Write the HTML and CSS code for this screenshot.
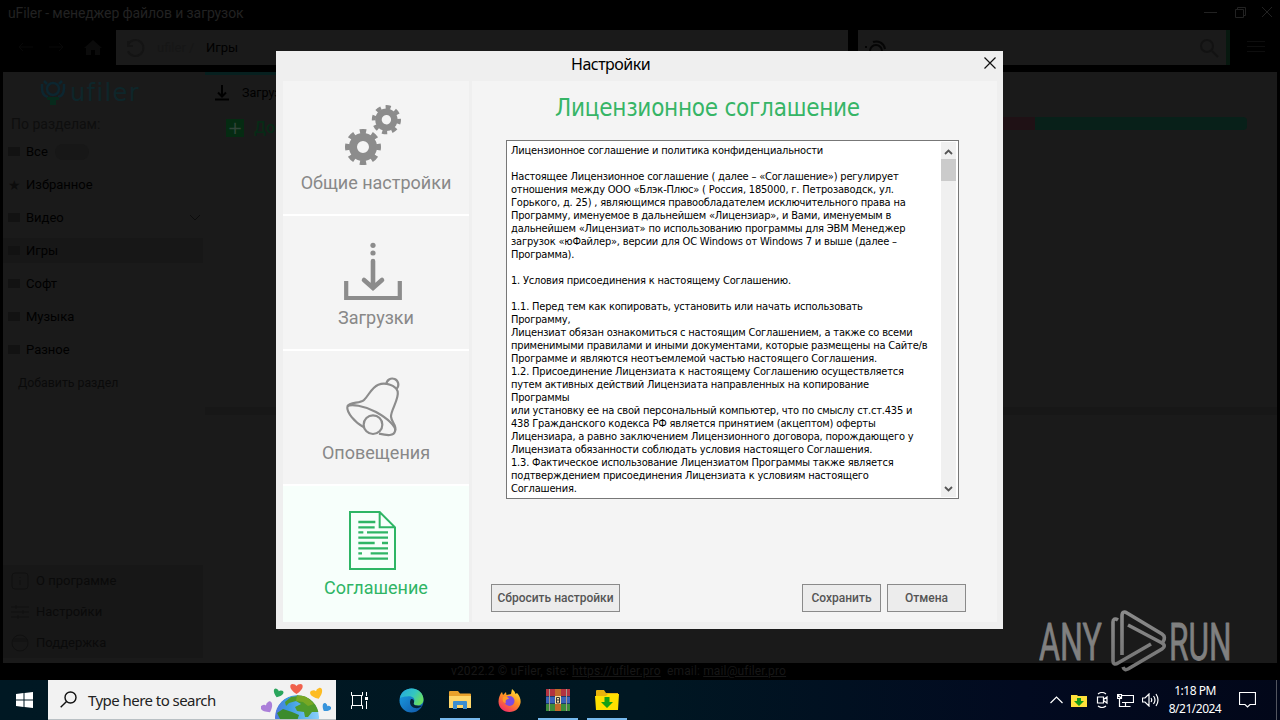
FILE: index.html
```html
<!DOCTYPE html>
<html lang="ru">
<head>
<meta charset="UTF-8">
<meta name="viewport" content="width=device-width, initial-scale=1.0">
<title>uFiler - менеджер файлов и загрузок</title>
<link rel="stylesheet" href="styles.css">
</head>
<body>
    <section class="app">
        <header class="titlebar">
            <span class="app-title">uFiler - менеджер файлов и загрузок</span>
            <svg class="win-buttons" width="72" height="14" viewBox="0 0 72 14">
                <path d="M0 7.500h13M31.500 4.500h8v8h-8zM33.500 4.500v-2h8v8h-2M58 2l10 10M68 2l-10 10"/>
            </svg>
        </header>

        <div class="toolbar">
            <div class="nav">
                <svg width="86" height="20" viewBox="0 0 86 20">
                    <path class="arrow" d="M1 10h14M1 10l4-4M1 10l4 4M31 10h14M45 10l-4-4M45 10l-4 4"/>
                    <path class="home" d="M66 11l9-8 9 8h-2v7h-5v-5h-4v5h-5v-7z"/>
                </svg>
            </div>
            <div class="address">
                <svg width="20" height="20" viewBox="0 0 20 20"><path d="M3 7a8 8 0 1 1 0 6M3 3v5h5"/></svg>
                <span class="crumb">ufiler /</span>
                <span>Игры</span>
            </div>
            <div class="search">
                <svg width="24" height="22" viewBox="0 0 24 22"><path class="dark" d="M6 18v-4a6 6 0 0 1 12 0v4M9 5a9 9 0 0 1 12 7M2 9v2M2 14v2"/></svg>
                <svg width="20" height="20" viewBox="0 0 20 20"><path d="M13 13l6 6"/><circle cx="8" cy="8" r="6"/></svg>
            </div>
            <div class="burger"><i></i><i></i><i></i></div>
        </div>

        <div class="content">
            <aside class="side">
                <div class="logo">
                    <svg width="26" height="27" viewBox="0 0 26 27">
                        <path class="blue" d="M2 4v4q0 8 6 9M24 4v4q0 8-6 9M4 1l3 3M22 1l-3 3"/>
                        <circle class="blue" cx="13" cy="9" r="6"/>
                        <path class="green" d="M7 17h12v3h-3v5h-6v-5H7z"/>
                    </svg>
                    <span>ufiler</span>
                </div>
                <div class="side-title">По разделам:</div>
                <ul class="sections">
                    <li><i class="folder"></i>Все<b class="toggle"></b></li>
                    <li><i class="star">★</i>Избранное</li>
                    <li><i class="folder"></i>Видео
                        <svg class="chevron" width="12" height="8" viewBox="0 0 12 8"><path d="M1 1l5 5 5-5"/></svg>
                    </li>
                    <li class="current"><i class="folder"></i>Игры</li>
                    <li><i class="folder"></i>Софт</li>
                    <li><i class="folder"></i>Музыка</li>
                    <li><i class="folder"></i>Разное</li>
                    <li class="add">Добавить раздел</li>
                </ul>
                <ul class="links">
                    <li><svg width="20" height="20" viewBox="0 0 20 20"><rect x="2" y="2" width="16" height="16" rx="3"/><path d="M10 9v5M10 6v1"/></svg>О программе</li>
                    <li><svg width="20" height="20" viewBox="0 0 20 20"><path d="M1 5h18M1 10h18M1 15h18M6 3v4M13 8v4M8 13v4"/></svg>Настройки</li>
                    <li><svg width="20" height="20" viewBox="0 0 20 20"><circle cx="10" cy="10" r="8"/><path d="M3 8h14M3 6h14"/></svg>Поддержка</li>
                </ul>
            </aside>
            <div class="files">
                <div class="tab">
                    <svg width="16" height="16" viewBox="0 0 16 16"><path d="M8 0v11M4 7.500l4 4 4-4M1 14.500h14"/></svg>
                    <span>Загрузки</span>
                </div>
                <div class="files-head">
                    <span class="plus">+</span>
                    <span class="add-file">Добавить</span>
                    <div class="disk"><i></i></div>
                </div>
                <div class="files-list"></div>
                <div class="files-info"></div>
            </div>
        </div>

        <footer class="status">v2022.2 © uFiler, site: <u>https://ufiler.pro</u> &nbsp;email: <u>mail@ufiler.pro</u></footer>
    </section>

    <section class="dialog">
        <header class="dialog-head">
            <span>Настройки</span>
            <svg class="close" width="12" height="12" viewBox="0 0 12 12"><path d="M.5.500l11 11M11.500.500l-11 11"/></svg>
        </header>
        <div class="dialog-body">
            <nav class="tabs">
                <a>
                    <svg width="60" height="60" viewBox="0 0 60 60">
                        <g class="gear" transform="translate(20 42)">
                            <circle r="10" stroke-width="8"/>
                            <circle class="teeth" r="15.600" stroke-width="4.800" pathLength="16"/>
                        </g>
                        <g class="gear" transform="translate(43.400 14.700) rotate(8) scale(.81)">
                            <circle r="9.800" stroke-width="8"/>
                            <circle class="teeth" r="15.600" stroke-width="4.800" pathLength="16"/>
                        </g>
                    </svg>
                    <span>Общие настройки</span>
                </a>
                <a>
                    <svg width="60" height="60" viewBox="0 0 60 60">
                        <g fill="#8c8c8c"><circle cx="30" cy="5.300" r="2.600"/><circle cx="30" cy="13" r="2.600"/></g>
                        <path class="line" stroke-width="4.600" stroke-linecap="round" d="M30 21v27M21 40l9 8 9-8"/>
                        <path class="line" stroke-width="4.200" d="M3.200 41v17h53.600V41"/>
                    </svg>
                    <span>Загрузки</span>
                </a>
                <a>
                    <svg class="bell" width="60" height="62" viewBox="201 105 180 186">
                        <g class="line" stroke-width="6.500">
                            <path d="M331 133a18 18 0 1 1 31 13"/>
                            <path d="M214 200C220 184 252 192 264 180C280 164 286 143 307 134C329 126 359 136 365 154C370 178 344 210 345 230C346 246 361 254 358 270"/>
                            <path d="M214 200C222 190 266 197 300 216C334 235 362 259 357 274C354 288 335 287 309 281M214 200C212 217 234 246 265 263"/>
                            <circle cx="291" cy="254" r="28"/>
                        </g>
                    </svg>
                    <span>Оповещения</span>
                </a>
                <a class="active">
                    <svg width="60" height="60" viewBox="201 510 180 180">
                        <path class="line" stroke-width="6" d="M222 516h89l46 46v125H222zM311 516v46h46"/>
                        <path class="line" stroke-width="7" d="M247 546h51M247 562h49M247 577h15M273 577h63M247 593h89M247 609h49M318 609h18M247 625h89M247 640h11M284 640h52M247 656h89"/>
                    </svg>
                    <span>Соглашение</span>
                </a>
            </nav>
            <div class="panel">
                <h1>Лицензионное соглашение</h1>
                <div class="license">
<pre>Лицензионное соглашение и политика конфиденциальности

Настоящее Лицензионное соглашение ( далее – «Соглашение») регулирует
отношения между ООО «Блэк-Плюс» ( Россия, 185000, г. Петрозаводск, ул.
Горького, д. 25) , являющимся правообладателем исключительного права на
Программу, именуемое в дальнейшем «Лицензиар», и Вами, именуемым в
дальнейшем «Лицензиат» по использованию программы для ЭВМ Менеджер
загрузок «юФайлер», версии для ОС Windows от Windows 7 и выше (далее –
Программа).

1. Условия присоединения к настоящему Соглашению.

1.1. Перед тем как копировать, установить или начать использовать
Программу,
Лицензиат обязан ознакомиться с настоящим Соглашением, а также со всеми
применимыми правилами и иными документами, которые размещены на Сайте/в
Программе и являются неотъемлемой частью настоящего Соглашения.
1.2. Присоединение Лицензиата к настоящему Соглашению осуществляется
путем активных действий Лицензиата направленных на копирование
Программы
или установку ее на свой персональный компьютер, что по смыслу ст.ст.435 и
438 Гражданского кодекса РФ является принятием (акцептом) оферты
Лицензиара, а равно заключением Лицензионного договора, порождающего у
Лицензиата обязанности соблюдать условия настоящего Соглашения.
1.3. Фактическое использование Лицензиатом Программы также является
подтверждением присоединения Лицензиата к условиям настоящего
Соглашения.</pre>
                    <div class="scrollbar">
                        <svg width="9" height="6" viewBox="0 0 9 6"><path d="M1 5l3.500-3.500L8 5"/></svg>
                        <i class="thumb"></i>
                        <svg width="9" height="6" viewBox="0 0 9 6"><path d="M1 1l3.500 3.500L8 1"/></svg>
                    </div>
                </div>
                <div class="buttons">
                    <button class="reset">Сбросить настройки</button>
                    <button>Сохранить</button>
                    <button>Отмена</button>
                </div>
            </div>
        </div>
    </section>

    <svg class="watermark" width="200" height="64" viewBox="0 0 200 64">
        <defs>
            <linearGradient id="metal" x1="0" y1="0" x2="0" y2="1">
                <stop offset="0" stop-color="#8a8a8a"/>
                <stop offset="1" stop-color="#747474"/>
            </linearGradient>
        </defs>
        <text transform="translate(0 50.500) scale(.63 1)">ANY</text>
        <text transform="translate(130 50.500) scale(.62 1)">RUN</text>
        <path d="M79 11c-3-2-5-1-5 2v39c0 3 2 4 5 2l33-19M83 46V7c0-4 2-5 5-3l35 21c3 2 3 5 1 8M89 16l34 18c3 2 3 4 0 6L89 60c-2 1-4 1-5-2"/>
    </svg>

    <footer class="taskbar">
        <div class="start">
            <svg width="17" height="16" viewBox="0 0 17 16"><path fill="#fff" d="M0 2l7.500-1v6.500H0zM8.500.900L17 0v7.500H8.500zM0 8.500h7.500V15L0 14zM8.500 8.500H17V16l-8.500-1z"/></svg>
        </div>
        <div class="task-search">
            <svg class="lens" width="17" height="17" viewBox="0 0 17 17"><circle cx="10.500" cy="6.500" r="5.500"/><path d="M6.500 10.500L.700 16.300"/></svg>
            <span>Type here to search</span>
            <svg class="earth" width="70" height="38" viewBox="0 0 70 38">
                <defs>
                    <path id="heart" d="M0 5C-8 0-7-5-4-5Q-1-5 0-3Q1-5 4-5C7-5 8 0 0 5z"/>
                    <clipPath id="globe"><circle cx="36" cy="36" r="22"/></clipPath>
                    <linearGradient id="sea"><stop offset="0" stop-color="#5478e0"/><stop offset=".3" stop-color="#3b9be0"/><stop offset="1" stop-color="#8bd0fa"/></linearGradient>
                </defs>
                <g clip-path="url(#globe)">
                    <circle cx="36" cy="36" r="22" fill="url(#sea)"/>
                    <path fill="#4f9a2b" d="M24 21l6-5 14-2 10 7 4 10-7 0-4 5h-3l-1-5-7-1-2-4 6-3-5-3-7 2-3 3z"/>
                    <path fill="#3c8b2d" d="M16 32l6-4 9 3 7 3-2 6H20z"/>
                    <path fill="#78a824" d="M36 14l9 1 8 8-6 2-5-4-7-1z"/>
                </g>
                <use href="#heart" fill="#f0614c" transform="translate(35.500 8)"/>
                <use href="#heart" fill="#2aa55c" transform="translate(17 12.500) rotate(20) scale(.8)"/>
                <use href="#heart" fill="#fdbc22" transform="translate(56 13) rotate(-20)"/>
                <use href="#heart" fill="#ab7fd9" transform="translate(6.500 27) rotate(-30)"/>
                <use href="#heart" fill="#3794dc" transform="translate(65 27) rotate(35) scale(.75)"/>
            </svg>
        </div>
        <div class="task-icons">
            <span class="view"><svg width="17" height="17" viewBox="0 0 17 17"><path fill="none" stroke="#fff" d="M.500 0v3.500h11V0M.500 17v-3.500h11V17M1.500 3.500v10M10.500 3.500v10M15.500 0v4M15.500 9v8"/><path fill="#fff" d="M14 5h3v3h-3z"/></svg></span>
            <span>
                <svg width="25" height="25" viewBox="0 0 25 25">
                    <defs>
                        <linearGradient id="edge-top" x1="0" y1="0" x2="1" y2=".5"><stop offset="0" stop-color="#25a6e0"/><stop offset=".6" stop-color="#34c6c0"/><stop offset="1" stop-color="#67dd64"/></linearGradient>
                        <linearGradient id="edge-low" x1="0" y1="0" x2="1" y2="1"><stop offset="0" stop-color="#1aa2e6"/><stop offset="1" stop-color="#1053a5"/></linearGradient>
                    </defs>
                    <circle cx="12.500" cy="12.500" r="12" fill="url(#edge-low)"/>
                    <path fill="url(#edge-top)" d="M1 10C2 4 7 .500 12.500.500 20 .500 24.500 6 24.500 11.500c0 4-3 6-6.500 6-3 0-4-1.500-3-3 2-5-3-7-7-6-3 0-5 .500-7 1.500z"/>
                    <path fill="#05243a" d="M12 11c-2 3-1 8 4 9 3 .500 5-.500 7-2-1-.500-3 0-5-.500-3 0-4-1.500-3-3 .600-2-1-4-3-3.500z"/>
                </svg>
            </span>
            <span class="open">
                <svg width="22" height="18" viewBox="0 0 22 18"><path fill="#e9a22c" d="M0 1q0-1 1-1h8l2 2.500h10q1 0 1 1V8H0z"/><path fill="#ffd76a" d="M0 5h22v12H0z"/><path fill="#3c8fd0" d="M4 18v-7q0-1 1-1h12q1 0 1 1v7h-4v-4H8v4z"/></svg>
            </span>
            <span>
                <svg width="23" height="23" viewBox="0 0 23 23">
                    <defs><linearGradient id="fox" x1=".8" y1="0" x2=".2" y2="1"><stop offset="0" stop-color="#ffe83b"/><stop offset=".45" stop-color="#ff8f22"/><stop offset="1" stop-color="#f2266b"/></linearGradient></defs>
                    <path fill="url(#fox)" d="M14 0c2 1.500 3 3 3.500 5L19 4c3 3 4 7 3.500 10-1 5-5 9-11 9C5 23 .500 18.500.500 12.500.500 9 2 5 4 3l1 3 3-3 .500 3L13 5z"/>
                    <circle cx="11.500" cy="12" r="5" fill="#7b4be0"/><path fill="#ff9a2a" d="M5 8c3-1 5 0 6 2-3 0-4 2-3 4-3 0-4-3-3-6z"/>
                </svg>
            </span>
            <span class="open">
                <svg width="24" height="22" viewBox="0 0 24 22"><path fill="#b3323f" d="M0 0h24v7H0z"/><path fill="#3a62b8" d="M0 7.500h24v7H0z"/><path fill="#3c8c3c" d="M0 15h24v7H0z"/><path fill="#a89a90" d="M3 0h1v22H3zM20 0h1v22h-1z"/><path fill="#c26a2a" d="M9 0h6v22H9z"/><path fill="#f3d9a0" d="M9 7h6v8H9z"/><path fill="none" stroke="#333" d="M10.500 11V8.500h3V11M10.500 11h3v3h-3z"/></svg>
            </span>
            <span class="open">
                <svg width="24" height="20" viewBox="0 0 24 20"><path fill="#e8b20c" d="M1 1q0-1 1-1h7l2 3h12v6H1z"/><path fill="#ffe000" d="M0 6h11l2-2h11l-1 16H1z"/><path fill="#14a014" d="M9.500 7h5v5H18l-6 6-6-6h3.500z"/></svg>
            </span>
        </div>
        <div class="tray">
            <svg width="13" height="8" viewBox="0 0 13 8"><path d="M.500 7L6.500 1l6 6"/></svg>
            <svg width="16" height="13" viewBox="0 0 16 13"><path fill="#ffe13a" stroke="none" d="M0 1h6l1 1h9v11H0z"/><path fill="#189a18" stroke="none" d="M6 4h4v3h3l-5 5-5-5h3z"/></svg>
            <svg width="14" height="16" viewBox="0 0 14 16"><path d="M3 2q4-3 8 0M3 14q4 3 8 0M2.500 5h6v6h-6zM8.500 7.500L12 5v6L8.500 8.500"/></svg>
            <svg width="17" height="14" viewBox="0 0 17 14"><path d="M5 2.500h11.500v7H5M2.500 6v7.500h11M8.500 9.500v4M.500 1.500h4v4h-4zM1 2l3 3"/></svg>
            <svg width="17" height="14" viewBox="0 0 17 14"><path d="M.500 5h2.500l4-4v12l-4-4H.500zM9 5q1.500 2 0 4M11.500 3q3 4 0 8M14 1q4 6 0 12"/></svg>
            <div class="clock"><span>1:18 PM</span><span>8/21/2024</span></div>
            <svg width="17" height="16" viewBox="0 0 17 16"><path d="M.500.500h16v12H11l-2.500 2.500L6 12.500H.500z"/></svg>
        </div>
    </footer>
</body>
</html>
```

FILE: styles.css
```css
* {
    box-sizing: border-box;
}
body {
    margin: 0;
    width: 1280px;
    height: 720px;
    overflow: hidden;
    position: relative;
    display: flex;
    flex-direction: column;
    background: #000;
    font-family: Roboto, "Liberation Sans", sans-serif;
}
ul {
    list-style: none;
    margin: 0;
    padding: 0;
}
svg {
    flex: none;
    fill: none;
}

/* main window, dimmed under the dialog */
.app {
    height: 680px;
    display: flex;
    flex-direction: column;
    color: #000;
    font-size: 13px;
}
.titlebar {
    height: 30px;
    padding: 0 4px 4px 8px;
    display: flex;
    justify-content: space-between;
    align-items: center;
    color: #222;
    font-size: 14px;
    letter-spacing: -.1px;
}
.win-buttons {
    stroke: #222;
    margin-top: -2px;
}
.toolbar {
    height: 35px;
    display: flex;
}
.nav {
    width: 116px;
    padding: 7px 0 0 18px;
}
.nav .arrow {
    stroke: #080808;
}
.nav .home {
    fill: #0b0b0b;
}
.address,
.search {
    background: #1a1a1a;
    display: flex;
    align-items: center;
}
.address {
    width: 732px;
    margin-right: 10px;
    padding-left: 9px;
}
.address svg {
    stroke: #141414;
    stroke-width: 2;
}
.address .crumb {
    width: 61px;
    padding-left: 12px;
    color: #161616;
}
.search {
    width: 372px;
    padding: 0 7px 0 6px;
    justify-content: space-between;
    border-right: 4px solid #07180f;
}
.search svg {
    stroke: #121212;
    stroke-width: 2;
}
.search .dark {
    stroke: #050505;
}
.burger {
    padding: 11px 0 0 17px;
}
.burger i {
    display: block;
    width: 18px;
    height: 1px;
    margin-bottom: 4px;
    background: #0e0e0e;
}
.content {
    height: 591px;
    margin: 7px 3px 0;
    display: flex;
    background: #1a1a1a;
}
.side {
    width: 202px;
    display: flex;
    flex-direction: column;
    padding: 6px 2px 5px 0;
}
.logo {
    height: 30px;
    padding-left: 37px;
    display: flex;
    align-items: center;
    gap: 4px;
    color: #0e262a;
    font: 24px/28px "DejaVu Sans", sans-serif;
    letter-spacing: 1.4px;
}
.logo .blue {
    stroke: #0c2630;
    stroke-width: 2.5;
}
.logo .green {
    fill: #072a1c;
}
.side-title {
    height: 27px;
    padding-left: 8px;
    color: #0e0e0e;
    font-size: 14px;
    line-height: 32px;
}
.sections li {
    height: 33px;
    padding-left: 5px;
    display: flex;
    align-items: center;
}
.sections .current {
    height: 25px;
    margin: 4px 0;
    background: #171717;
}
.sections .folder {
    width: 12px;
    height: 9px;
    margin-right: 6px;
    background: #121212;
}
.sections .star {
    width: 18px;
    color: #0c0c0c;
    font: 14px "DejaVu Sans", sans-serif;
}
.sections .toggle {
    width: 34px;
    height: 16px;
    margin-left: 7px;
    border-radius: 8px;
    background: #171717;
}
.sections .add {
    padding-left: 15px;
    color: #0a0a0a;
    font-size: 12.3px;
}
.chevron {
    margin: 0 2px 0 auto;
    stroke: #0c0c0c;
}
.links {
    margin-top: auto;
    padding: 0 0 0 7px;
    background: #171717;
}
.links li {
    height: 31px;
    display: flex;
    align-items: center;
    gap: 6px;
    color: #0a0a0a;
}
.links svg {
    stroke: #101010;
}
.files {
    flex: 1;
    display: flex;
    flex-direction: column;
}
.tab {
    width: 120px;
    height: 38px;
    display: flex;
    align-items: center;
    gap: 12px;
    padding-left: 9px;
    border-top: 3px solid #07201f;
    font-size: 12.5px;
}
.tab svg {
    stroke: #000;
    stroke-width: 2;
}
.files-head {
    height: 38px;
    padding: 0 30px 4px 21px;
    display: flex;
    align-items: center;
    color: #072a16;
    font-size: 16px;
    font-weight: 500;
}
.plus {
    width: 18px;
    height: 18px;
    margin: 2px 10px 0 0;
    background: #052b12;
    color: #33443a;
    font: 18px/17px "DejaVu Sans", sans-serif;
    text-align: center;
}
.disk {
    width: 260px;
    height: 13px;
    margin: -8px 0 0 auto;
    background: #082019;
    border-radius: 4px;
    overflow: hidden;
}
.disk i {
    display: block;
    width: 48px;
    height: 100%;
    background: #1f1115;
}
.files-list {
    height: 259px;
}
.files-info {
    height: 8px;
    background: #171717;
}
.status {
    height: 17px;
    padding-left: 451px;
    color: #171717;
    font-size: 12px;
    line-height: 16px;
    letter-spacing: .15px;
}

/* settings dialog */
.dialog {
    position: absolute;
    left: 276px;
    top: 51px;
    width: 727px;
    height: 578px;
    display: flex;
    flex-direction: column;
    padding: 0 6px 7px 7px;
    background: #efefef;
}
.dialog-head {
    height: 30px;
    display: flex;
    align-items: flex-start;
    justify-content: space-between;
    padding: 3px 1px 0 288px;
    color: #000;
    font: 16px/20px "Noto Sans", sans-serif;
    letter-spacing: -.5px;
}
.close {
    margin-top: 3px;
    stroke: #111;
    stroke-width: 1.2;
}
.dialog-body {
    flex: 1;
    display: flex;
    gap: 3px;
}
.tabs {
    width: 186px;
    display: flex;
    flex-direction: column;
    gap: 2px;
    background: #fff;
}
.tabs a {
    height: 133px;
    padding-top: 24px;
    display: flex;
    flex-direction: column;
    align-items: center;
    background: #f4f4f4;
    color: #888;
    font-size: 18px;
    line-height: 22px;
}
.tabs a.active {
    height: 136px;
    background: #f7fffb;
    color: #2fb565;
}
.tabs svg {
    margin: 0 6px 7px 0;
}
.tabs .bell {
    margin-bottom: 5px;
}
.tabs .line,
.gear circle {
    stroke: #8c8c8c;
}
.gear .teeth {
    stroke-dasharray: 1.05 .95;
    stroke-dashoffset: .525;
}
.tabs .active .line {
    stroke: #2fb565;
}
.panel {
    flex: 1;
    background: #f4f4f4;
    display: flex;
    flex-direction: column;
}
.panel h1 {
    height: 59px;
    margin: 0;
    padding: 13px 0 0 83px;
    color: #36b566;
    font: 24px/29px "DejaVu Sans Condensed", "DejaVu Sans", sans-serif;
    letter-spacing: -.25px;
    white-space: nowrap;
}
.license {
    width: 453px;
    height: 359px;
    margin-left: 34px;
    padding-left: 4px;
    display: flex;
    background: #fff;
    border: 1px solid #777;
}
.license pre {
    flex: 1;
    min-width: 0;
    margin: 3px 0 0;
    color: #000;
    font: 11px/13px "DejaVu Sans Condensed", "DejaVu Sans", sans-serif;
    letter-spacing: -.19px;
}
.scrollbar {
    width: 15px;
    margin: 1px 2px 1px 0;
    padding: 7px 0 5px;
    display: flex;
    flex-direction: column;
    align-items: center;
    background: #f0f0f0;
}
.scrollbar svg {
    stroke: #555;
    stroke-width: 1.8;
}
.scrollbar .thumb {
    width: 15px;
    height: 22px;
    margin: 4px 0 auto;
    background: #cbcbcb;
}
.buttons {
    display: flex;
    gap: 6px;
    padding: 85px 0 0 19px;
}
.buttons button {
    width: 79px;
    height: 28px;
    padding: 0;
    border: 1px solid #8a8a8a;
    background: #ececec;
    color: #555;
    font: 500 12px Roboto, sans-serif;
    white-space: nowrap;
}
.buttons .reset {
    width: 129px;
    margin-right: 176px;
}

/* recorder logo over the desktop */
.watermark {
    position: absolute;
    left: 1039px;
    top: 609px;
    fill: none;
    stroke: url(#metal);
    stroke-width: 3.6;
    stroke-linejoin: round;
}
.watermark text {
    fill: #808080;
    stroke: #808080;
    stroke-width: .8;
    font: 51px Roboto, sans-serif;
}

/* windows taskbar */
.taskbar {
    height: 40px;
    display: flex;
    background: linear-gradient(90deg, #001823, #001722 50%, #020a20 80%, #020719);
    color: #fff;
}
.start {
    width: 48px;
    display: flex;
    align-items: center;
    justify-content: center;
}
.task-search {
    width: 288px;
    padding-left: 12px;
    display: flex;
    align-items: center;
    background: #f2f2f2;
    border-bottom: 1px solid #b9c0c4;
    color: #222;
    font: 15px/20px "Noto Sans", sans-serif;
    letter-spacing: -.55px;
}
.lens {
    margin-right: 11px;
    stroke: #111;
    stroke-width: 1.4;
}
.earth {
    margin: 0 5px 0 auto;
    align-self: flex-end;
}
.task-icons {
    display: flex;
    gap: 9px;
    padding-left: 4px;
}
.task-icons span {
    width: 40px;
    display: flex;
    align-items: center;
    justify-content: center;
    border-bottom: 2px solid transparent;
    padding-top: 2px;
}
.task-icons .view {
    width: 42px;
    padding-right: 3px;
}
.task-icons .open {
    border-color: #76b9ed;
}
.tray {
    margin-left: auto;
    margin-right: 3px;
    padding-right: 20px;
    border-right: 1px solid #52555f;
    display: flex;
    align-items: center;
    gap: 8px;
}
.tray svg {
    stroke: #fff;
    stroke-width: 1.2;
}
.clock {
    width: 56px;
    margin: 0 8px 0 0;
    display: flex;
    flex-direction: column;
    align-items: center;
    font: 12px/18px "Noto Sans", sans-serif;
    letter-spacing: -.5px;
}
```
